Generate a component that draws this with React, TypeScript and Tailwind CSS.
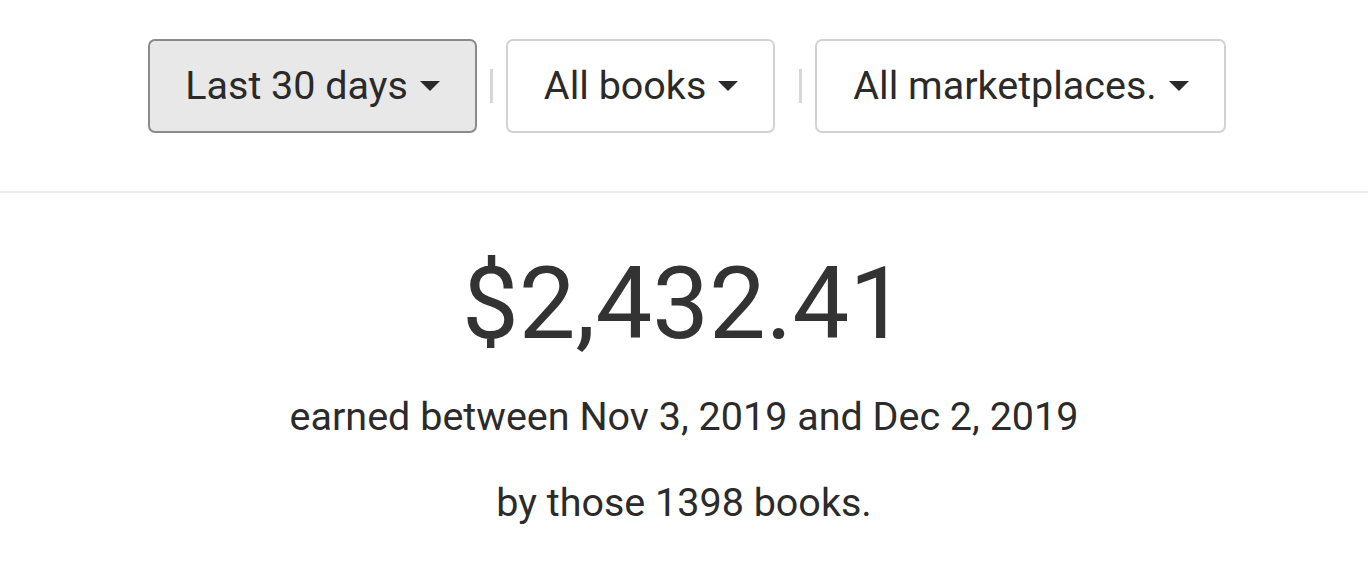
import React from 'react'

interface FilterButtonProps {
  label: string
  active?: boolean
}

function Caret() {
  return (
    <svg className="w-[20px] h-[10px] ml-[12px] shrink-0" viewBox="0 0 20 10" fill="currentColor">
      <path d="M0 0h20L10 10z" />
    </svg>
  )
}

function FilterButton({ label, active }: FilterButtonProps) {
  return (
    <button
      className={
        active
          ? 'flex items-center h-[94px] px-[35px] rounded-[7px] border-2 border-[#8a8a8a] bg-[#e8e8e8] text-[#2a2a2a]'
          : 'flex items-center h-[94px] pl-[36px] pr-[35px] rounded-[7px] border-2 border-[#d2d2d2] bg-white text-[#2a2a2a]'
      }
    >
      <span className="text-[39.5px] leading-none">{label}</span>
      <Caret />
    </button>
  )
}

function Separator({ className }: { className: string }) {
  return <div className={'w-[3px] h-[34px] bg-[#d6d6d6] ' + className} />
}

export default function App() {
  return (
    <div className="min-h-screen bg-white font-['Roboto','Liberation_Sans',sans-serif] text-[#333]">
      <header className="flex justify-center items-center pt-[39px] pb-[58px] border-b-2 border-[#ececec]">
        <div className="flex items-center pl-[6px]">
          <FilterButton label="Last 30 days" active />
          <Separator className="ml-[13px] mr-[13px]" />
          <FilterButton label="All books" />
          <Separator className="ml-[24px] mr-[13px]" />
          <FilterButton label="All marketplaces." />
        </div>
      </header>

      <main className="text-center">
        <div className="mt-[60px] text-[101px] leading-none text-[#333]">$2,432.41</div>
        <p className="mt-[43px] text-[39.5px] leading-none text-[#2b2b2b]">
          earned between Nov 3, 2019 and Dec 2, 2019
        </p>
        <p className="mt-[46px] text-[39.5px] leading-none text-[#2b2b2b]">by those 1398 books.</p>
      </main>
    </div>
  )
}
